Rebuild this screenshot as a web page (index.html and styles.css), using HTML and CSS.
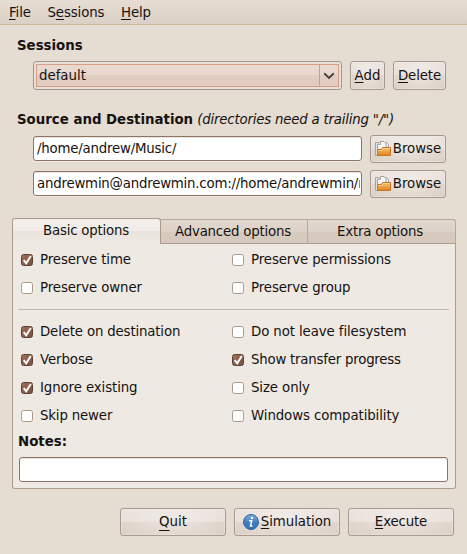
FILE: index.html
```html
<!DOCTYPE html>
<html lang="en">
<head>
<meta charset="utf-8">
<title>Sessions</title>
<link rel="stylesheet" href="styles.css">
</head>
<body>
<svg class="defs" width="0" height="0" aria-hidden="true">
  <defs>
    <linearGradient id="orange" x1="0" y1="0" x2="0" y2="1"><stop offset="0" stop-color="#f5c478"/><stop offset=".45" stop-color="#eda84b"/><stop offset="1" stop-color="#dc8220"/></linearGradient>
    <linearGradient id="blue" x1="0" y1="0" x2="0" y2="1"><stop offset="0" stop-color="#80ace0"/><stop offset=".5" stop-color="#4580be"/><stop offset="1" stop-color="#2f73ae"/></linearGradient>
    <symbol id="folder" viewBox="0 0 16 16">
      <path d="M.5 1.500h3v13h-3z" fill="#e4e2df" stroke="#a5a19c"/>
      <path d="M8.500 1.500h3l2 2v6h-5z" fill="#eee" stroke="#aaa7a3"/>
      <path d="M2.500 3.500l3-3h3.500l2 2v11h-8.500z" fill="#f7f7f6" stroke="#a09e9b"/>
      <path d="M5.500.500v3h-3" fill="#ddd" stroke="#aaa"/>
      <path d="M2.500 14.500v-6h4l1-2h8v8z" fill="url(#orange)" stroke="#c9741f"/>
      <path d="M3.500 9.500h3.500l1-2h6.500" fill="none" stroke="#fbd48c"/>
    </symbol>
    <symbol id="check" viewBox="0 0 12 12"><path d="M2.700 6.200l2.500 3.100L9.800 1.900" fill="none" stroke="#fff" stroke-width="1.900"/></symbol>
  </defs>
</svg>
<nav class="menubar"><span><u>F</u>ile</span><span>S<u>e</u>ssions</span><span><u>H</u>elp</span></nav>
<main>
  <h2 class="sessions-title">Sessions</h2>
  <div class="session-row">
    <div class="combo"><div class="combo-face"><span>default</span><i><svg width="12" height="8" viewBox="0 0 12 8"><path d="M1.200 1.300L6 5.900l4.800-4.600" fill="none" stroke="#4a423d" stroke-width="1.900"/></svg></i></div></div>
    <button class="btn add"><span><u>A</u>dd</span></button>
    <button class="btn delete"><span><u>D</u>elete</span></button>
  </div>
  <h2 class="source-title">Source and Destination <em>(directories need a trailing "/")</em></h2>
  <div class="path-row"><div class="entry"><span>/home/andrew/Music/</span></div><button class="btn browse"><svg width="16" height="16"><use href="#folder"/></svg><span>Browse</span></button></div>
  <div class="path-row"><div class="entry"><span class="remote">andrewmin@andrewmin.com://home/andrewmin/m</span></div><button class="btn browse"><svg width="16" height="16"><use href="#folder"/></svg><span>Browse</span></button></div>
</main>
<section class="notebook">
  <div class="tabs"><div class="tab active">Basic options</div><div class="tab">Advanced options</div><div class="tab">Extra options</div></div>
  <div class="panel">
    <div class="checks">
      <label><i class="box on"><svg width="12" height="12"><use href="#check"/></svg></i><span>Preserve time</span></label>
      <label><i class="box"></i><span>Preserve permissions</span></label>
      <label><i class="box"></i><span>Preserve owner</span></label>
      <label><i class="box"></i><span>Preserve group</span></label>
    </div>
    <hr>
    <div class="checks">
      <label><i class="box on"><svg width="12" height="12"><use href="#check"/></svg></i><span class="snug">Delete on destination</span></label>
      <label><i class="box"></i><span>Do not leave filesystem</span></label>
      <label><i class="box on"><svg width="12" height="12"><use href="#check"/></svg></i><span>Verbose</span></label>
      <label><i class="box on"><svg width="12" height="12"><use href="#check"/></svg></i><span class="tight">Show transfer progress</span></label>
      <label><i class="box on"><svg width="12" height="12"><use href="#check"/></svg></i><span>Ignore existing</span></label>
      <label><i class="box"></i><span>Size only</span></label>
      <label><i class="box"></i><span class="snug">Skip newer</span></label>
      <label><i class="box"></i><span>Windows compatibility</span></label>
    </div>
    <h2 class="notes-title">Notes:</h2>
    <div class="entry notes"></div>
  </div>
</section>
<footer>
  <button class="btn quit"><span><u>Q</u>uit</span></button>
  <button class="btn sim"><svg width="16" height="16" viewBox="0 0 16 16"><circle cx="8" cy="8" r="7.500" fill="url(#blue)" stroke="#2d68a5"/><circle cx="9" cy="4" r="1.300" fill="#fff"/><path d="M6 6.800h2.700L7.500 12h1.900" fill="none" stroke="#fff" stroke-width="1.500"/></svg><span><u>S</u>imulation</span></button>
  <button class="btn execute"><span><u>E</u>xecute</span></button>
</footer>
</body>
</html>
```
FILE: styles.css
```css
* { box-sizing: border-box; }
body {
  margin: 0;
  width: 467px;
  height: 554px;
  overflow: hidden;
  background: #e5dcd2;
  color: #151210;
  font: 13.33px/16px "DejaVu Sans", sans-serif;
  white-space: nowrap;
}
.defs { position: absolute; }
svg { display: block; flex: none; }
u { text-decoration: underline; text-decoration-thickness: 1px; text-underline-offset: 2px; text-decoration-skip-ink: none; }
.quit u { text-underline-offset: 4px; }
h2 { margin: 0; font-size: 13.33px; line-height: 16px; }
h2 em { font-weight: normal; letter-spacing: -0.2px; margin-left: -0.5px; }
.menubar {
  display: flex;
  gap: 16.500px;
  height: 25px;
  padding: 5px 9px 0;
  letter-spacing: -0.1px;
  background: linear-gradient(#e6ddd3, #dcd0c6);
  border-bottom: 1px solid #cdb5a2;
}
main { padding: 13px 20px 0 17px; }
.session-row { display: flex; margin: 7px 0 0 16px; height: 29px; }
.combo {
  width: 309px;
  padding: 2px;
  border: 1px solid #a3968e;
  border-radius: 3px;
  background: #e9dfd9;
}
.combo-face {
  display: flex;
  justify-content: space-between;
  align-items: center;
  height: 23px;
  padding-left: 2px;
  border: 1px solid #d79e84;
  background: linear-gradient(#e7d9d1, #ead8cf 48%, #e1cdc2 50%, #dfcbbf);
}
.combo-face i { display: flex; align-items: center; justify-content: center; width: 19px; height: 21px; border-left: 1px solid #b9a59a; }
.btn {
  display: flex;
  align-items: center;
  justify-content: center;
  flex: none;
  margin: 0;
  padding: 0;
  border: 1px solid #a89a90;
  border-radius: 3px;
  background: radial-gradient(ellipse 55% 90% at 50% 45%, rgba(255,255,255,.38), rgba(255,255,255,0)), linear-gradient(#ebe3de, #e7ded8 48%, #dfd3ca 50%, #ddd1c7);
  box-shadow: inset 0 0 0 1px rgba(245,237,232,.4), 0 0 1px #d5c9be;
  color: inherit;
  font: inherit;
}
.add { width: 35px; margin-left: 8px; }
.delete { width: 53px; margin-left: 8px; letter-spacing: -0.1px; }
.source-title { margin: 22px 0 7px; }
.path-row { display: flex; margin: 0 0 7px 16px; height: 28px; }
.entry {
  display: flex;
  align-items: center;
  width: 329px;
  height: 25px;
  padding-left: 3px;
  padding-right: 1px;
  border: 1px solid #8d7467;
  border-radius: 3px;
  background: #fff;
  box-shadow: inset 0 1px #e8e5e2, 0 1px #eee8e2;
  letter-spacing: -0.2px;
}
.path-row .entry { margin-top: 1px; }
.entry span { width: 100%; overflow: hidden; }
.entry .remote { letter-spacing: -0.21px; }
.browse { width: 76px; height: 28px; margin-left: 8px; gap: 2px; }
.notebook { width: 444px; margin: 20px 0 0 12px; }
.tabs { display: flex; align-items: flex-end; height: 26px; }
.tab {
  width: 148px;
  height: 25px;
  padding: 4px 3px 0 0;
  border: 1px solid #b9a898;
  border-left: 0;
  border-bottom-color: #b09c8b;
  background: linear-gradient(#e2d8cf, #ded2c8 50%, #d7cabe 54%, #d6c8bc);
  text-align: center;
  letter-spacing: -0.2px;
}
.tab:nth-child(2) { width: 147px; padding-right: 2px; }
.tab:last-child { border-top-right-radius: 3px; }
.tab.active {
  width: 149px;
  height: 26px;
  padding-right: 1px;
  border: 1px solid #ab9887;
  border-bottom: 0;
  border-radius: 3px 3px 0 0;
  background: linear-gradient(#f3f0ec, #f0ece8 48%, #eae3dd 50%, #eee9e3);
}
.panel {
  height: 245px;
  padding: 2px 6px 0;
  border: 1px solid #b09c8b;
  border-top: 0;
  border-radius: 0 0 3px 3px;
  background: #eee9e3;
}
.checks { display: grid; grid-template-columns: 211px 1fr; grid-auto-rows: 28px; margin-left: 2px; letter-spacing: -0.1px; }
.checks label { display: flex; align-items: center; gap: 7px; }
.checks .snug { letter-spacing: -0.16px; }
.checks .tight { letter-spacing: -0.22px; }
.box { width: 12px; height: 12px; border: 1px solid #aa9888; border-radius: 2.5px; background: #fff; }
.box.on { border-color: #5b4036; background: linear-gradient(135deg, #a27057, #76503f); }
.box svg { margin: -1px; }
hr { height: 1px; margin: 7px 0 8px -1px; border: 0; background: #c5b8ab; }
.notes-title { margin: 4px 0 7px -1px; }
.notes { width: 429px; }
footer { display: flex; gap: 8px; margin: 19px 0 0 120px; }
footer .btn { width: 106px; height: 28px; }
.sim { gap: 2px; letter-spacing: -0.06px; }
.execute { letter-spacing: -0.15px; }
```
